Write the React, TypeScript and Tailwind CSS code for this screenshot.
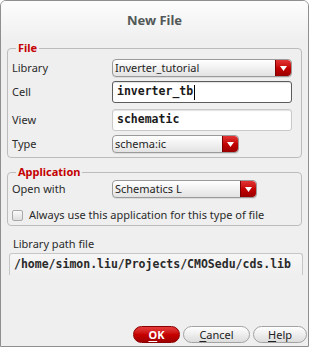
import React from "react"

const sans = { fontFamily: '"Noto Sans", "Open Sans", sans-serif' }
const mono = { fontFamily: '"DejaVu Sans Mono", "Liberation Mono", monospace' }

function Arrow({ rounded = "rounded-r-[4px]" }: { rounded?: string }) {
    return (
        <span
            className={`flex h-full w-[16px] items-center justify-center ${rounded} border-l border-[#7a0000] bg-gradient-to-b from-[#e23232] via-[#c40000] to-[#9a0000]`}
        >
            <svg width="7" height="5" viewBox="0 0 7 5">
                <polygon points="0,0 7,0 3.5,5" fill="#ffffff" />
            </svg>
        </span>
    )
}

function Dropdown({ value, width }: { value: string; width: string }) {
    return (
        <div
            className={`flex h-[18px] ${width} items-stretch rounded-[4px] border border-[#9a9a9a] bg-gradient-to-b from-[#ffffff] to-[#e3e3e3] shadow-[0_1px_0_rgba(0,0,0,0.08)]`}
        >
            <span className="flex-1 truncate pl-[2px] text-[11px] leading-[16px] text-[#1e1e1e]" style={sans}>
                {value}
            </span>
            <Arrow />
        </div>
    )
}

function TextInput({ value, focused }: { value: string; focused?: boolean }) {
    return (
        <div
            className={`flex h-[22px] w-[180px] items-center rounded-[3px] border bg-white pl-[4px] shadow-[inset_0_1px_1px_rgba(0,0,0,0.12)] ${
                focused ? "border-[#5c5c5c]" : "border-[#c9c9c9]"
            }`}
        >
            <span className="text-[11.5px] font-bold text-[#1a1a1a]" style={mono}>
                {value}
            </span>
            {focused && <span className="ml-[1px] h-[15px] w-px bg-black" />}
        </div>
    )
}

function Row({ label, children, className = "" }: { label: string; children: React.ReactNode; className?: string }) {
    return (
        <div className={`flex items-center ${className}`}>
            <span className="w-[104px] pl-[4px] text-[11px] text-[#2a2a2a]" style={sans}>
                {label}
            </span>
            {children}
        </div>
    )
}

function Button({ label, hot, width, primary }: { label: string; hot: string; width: string; primary?: boolean }) {
    const rest = label.slice(1)
    return (
        <button
            className={`flex h-[17px] ${width} items-center justify-center rounded-full border text-[11px] leading-none ${
                primary
                    ? "border-[#8a0000] bg-gradient-to-b from-[#e53a3a] via-[#c70000] to-[#a00000] font-bold text-white"
                    : "border-[#a3a3a3] bg-gradient-to-b from-[#ffffff] to-[#dcdcdc] text-[#222]"
            }`}
            style={sans}
        >
            <span className="underline underline-offset-[2px]">{hot}</span>
            {rest}
        </button>
    )
}

export default function App() {
    return (
        <div className="flex h-[347px] w-[309px] flex-col overflow-hidden rounded-t-[6px] border border-[#8f8f8f] bg-[#efefef]" style={sans}>
            <div className="flex h-[39px] items-center justify-center bg-gradient-to-b from-[#fdfdfd] to-[#efefef]">
                <span className="text-[13px] font-bold text-[#535858]">New File</span>
            </div>

            <fieldset className="mx-[6px] rounded-[4px] border border-[#bcbcbc] px-0 pb-[4px] pt-[3px]">
                <legend className="ml-[8px] px-[2px] text-[11px] font-bold leading-[16px] text-[#c40000]">File</legend>
                <Row label="Library">
                    <Dropdown value="Inverter_tutorial" width="w-[180px]" />
                </Row>
                <Row label="Cell" className="mt-[4px]">
                    <TextInput value="inverter_tb" focused />
                </Row>
                <Row label="View" className="mt-[6px]">
                    <TextInput value="schematic" />
                </Row>
                <Row label="Type" className="mt-[4px]">
                    <Dropdown value="schema:ic" width="w-[127px]" />
                </Row>
            </fieldset>

            <fieldset className="mx-[6px] mt-[6px] rounded-[4px] border border-[#bcbcbc] px-0 pb-[3px] pt-0">
                <legend className="ml-[8px] px-[2px] text-[11px] font-bold leading-[16px] text-[#c40000]">Application</legend>
                <Row label="Open with">
                    <Dropdown value="Schematics L" width="w-[145px]" />
                </Row>
                <div className="mt-[10px] flex h-[14px] items-center pl-[4px]">
                    <span className="h-[11px] w-[11px] rounded-[2px] border border-[#a9a9a9] bg-gradient-to-b from-[#fafafa] to-[#dedede]" />
                    <span className="ml-[6px] text-[11px] text-[#2a2a2a]">Always use this application for this type of file</span>
                </div>
            </fieldset>

            <div className="mt-[10px] pl-[12px] text-[11px] leading-[16px] text-[#2a2a2a]">Library path file</div>
            <div className="ml-[8px] mr-[5px] mt-[1px] flex h-[22px] items-center rounded-t-[3px] border border-b-0 border-[#c6c6c6] bg-gradient-to-b from-[#f6f6f6] to-[#efefef] pl-[4px]">
                <span className="text-[11.5px] font-bold text-[#2a2a2a]" style={mono}>
                    /home/simon.liu/Projects/CMOSedu/cds.lib
                </span>
            </div>

            <div className="flex-1" />

            <div className="mb-[3px] flex justify-end gap-[3px] pr-[1px]">
                <Button label="OK" hot="O" width="w-[47px]" primary />
                <Button label="Cancel" hot="C" width="w-[67px]" />
                <Button label="Help" hot="H" width="w-[54px]" />
            </div>
        </div>
    )
}
